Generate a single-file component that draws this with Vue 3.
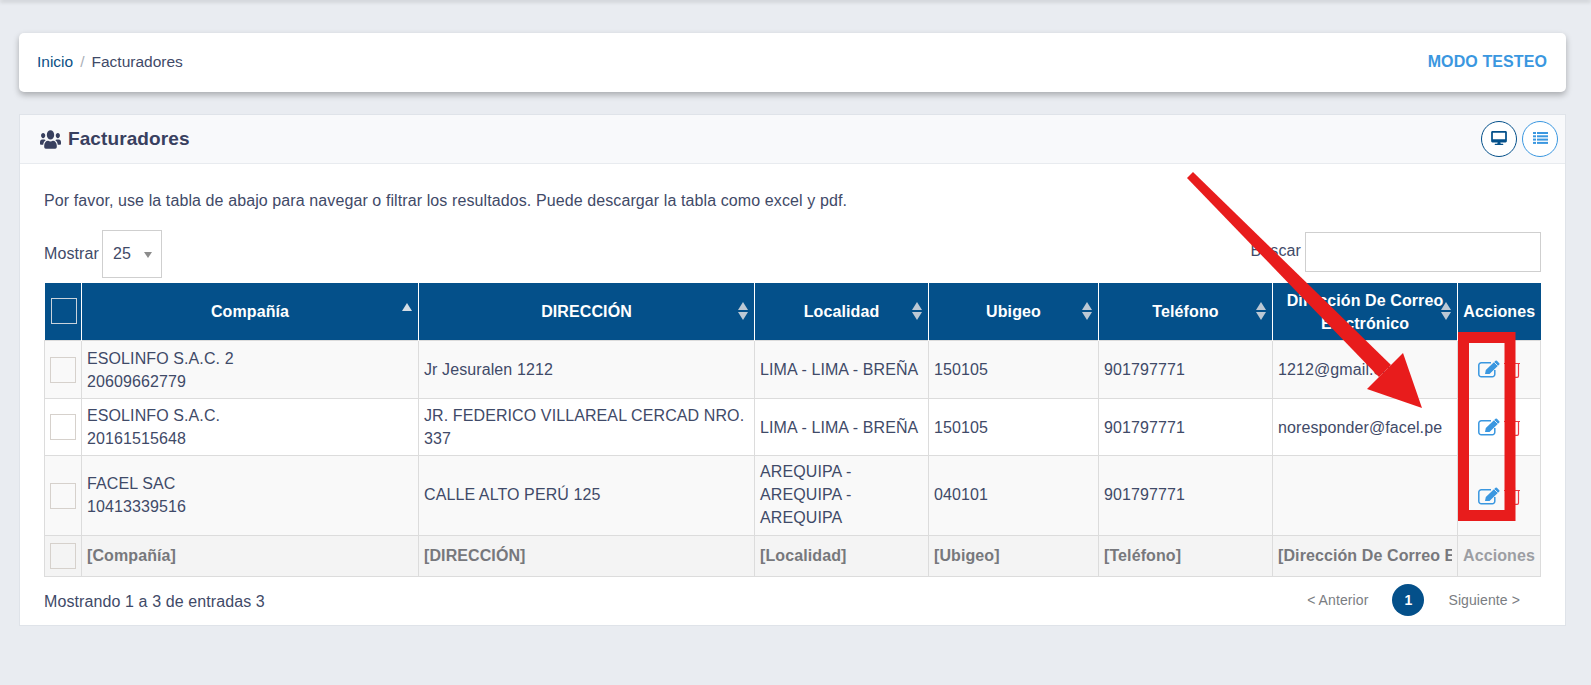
<script setup>
const columns = [
  { label: 'Compañía', sort: 'asc' },
  { label: 'DIRECCIÓN', sort: 'both' },
  { label: 'Localidad', sort: 'both' },
  { label: 'Ubigeo', sort: 'both' },
  { label: 'Teléfono', sort: 'both' },
  { label: 'Dirección De Correo Electrónico', sort: 'both' },
  { label: 'Acciones', sort: null }
]
const rows = [
  { name: 'ESOLINFO S.A.C. 2', ruc: '20609662779', addr: 'Jr Jesuralen 1212', loc: 'LIMA - LIMA - BREÑA', ubi: '150105', tel: '901797771', mail: '1212@gmail.com' },
  { name: 'ESOLINFO S.A.C.', ruc: '20161515648', addr: 'JR. FEDERICO VILLAREAL CERCAD NRO. 337', loc: 'LIMA - LIMA - BREÑA', ubi: '150105', tel: '901797771', mail: 'noresponder@facel.pe' },
  { name: 'FACEL SAC', ruc: '10413339516', addr: 'CALLE ALTO PERÚ 125', loc: 'AREQUIPA - AREQUIPA - AREQUIPA', ubi: '040101', tel: '901797771', mail: '' }
]
const filters = ['[Compañía]', '[DIRECCIÓN]', '[Localidad]', '[Ubigeo]', '[Teléfono]', '[Dirección De Correo Electrónico]']
</script>

<template>
  <div class="page">
    <div class="topbar"></div>

    <div class="crumbs">
      <div class="crumb-list">
        <span class="crumb-link">Inicio</span>
        <span class="crumb-sep">/</span>
        <span>Facturadores</span>
      </div>
      <span class="mode">MODO TESTEO</span>
    </div>

    <section class="panel">
      <header class="panel-head">
        <h1 class="title">
          <svg class="users" viewBox="0 0 640 512" preserveAspectRatio="none"><path fill="currentColor" d="M96 224c35.300 0 64-28.700 64-64s-28.700-64-64-64-64 28.700-64 64 28.700 64 64 64zm448 0c35.300 0 64-28.700 64-64s-28.700-64-64-64-64 28.700-64 64 28.700 64 64 64zm32 32h-64c-17.600 0-33.500 7.100-45.100 18.600 40.300 22.100 68.900 62 75.100 109.400h66c17.700 0 32-14.300 32-32v-32c0-35.300-28.700-64-64-64zm-256 0c61.900 0 112-50.100 112-112S381.900 32 320 32 208 82.100 208 144s50.100 112 112 112zm76.800 32h-8.300c-20.800 10-43.900 16-68.500 16s-47.600-6-68.500-16h-8.300C179.600 288 128 339.600 128 403.200V432c0 26.500 21.500 48 48 48h288c26.500 0 48-21.500 48-48v-28.800c0-63.600-51.600-115.200-115.200-115.200zm-223.700-13.400C161.500 263.100 145.600 256 128 256H64c-35.300 0-64 28.700-64 64v32c0 17.700 14.300 32 32 32h65.900c6.300-47.400 34.900-87.300 75.200-109.400z"/></svg>
          Facturadores
        </h1>
        <div class="head-btns">
          <button class="round dark">
            <svg width="16" height="14" viewBox="0 0 576 512"><path fill="#04508a" d="M528 0H48C21.500 0 0 21.500 0 48v320c0 26.500 21.500 48 48 48h192l-16 48h-72c-13.300 0-24 10.700-24 24s10.700 24 24 24h272c13.300 0 24-10.700 24-24s-10.700-24-24-24h-72l-16-48h192c26.500 0 48-21.500 48-48V48c0-26.500-21.500-48-48-48zm-16 300H64V64h448v236z"/></svg>
          </button>
          <button class="round light">
            <svg width="15" height="12" viewBox="0 0 15 12"><g fill="#3a97e0"><rect x="0" y="0" width="3" height="2"/><rect x="4" y="0" width="11" height="2"/><rect x="0" y="3.300" width="3" height="2"/><rect x="4" y="3.300" width="11" height="2"/><rect x="0" y="6.600" width="3" height="2"/><rect x="4" y="6.600" width="11" height="2"/><rect x="0" y="9.900" width="3" height="2"/><rect x="4" y="9.900" width="11" height="2"/></g></svg>
          </button>
        </div>
      </header>

      <div class="panel-body">
        <p class="intro">Por favor, use la tabla de abajo para navegar o filtrar los resultados. Puede descargar la tabla como excel y pdf.</p>

        <div class="controls">
          <label class="length">
            Mostrar
            <span class="select">25<i class="caret"></i></span>
          </label>
          <label class="search">
            <span class="search-label">Buscar</span>
            <span class="search-box"></span>
          </label>
        </div>

        <table class="grid">
          <colgroup>
            <col style="width:37px" /><col style="width:337px" /><col style="width:336px" /><col style="width:174px" />
            <col style="width:170px" /><col style="width:174px" /><col style="width:185px" /><col style="width:83px" />
          </colgroup>
          <thead>
            <tr>
              <th class="check-cell"><span class="check head-check"></span></th>
              <th v-for="c in columns" :key="c.label">
                {{ c.label }}
                <span v-if="c.sort === 'asc'" class="sort asc"><i class="up"></i></span>
                <span v-else-if="c.sort" class="sort"><i class="up"></i><i class="down"></i></span>
              </th>
            </tr>
          </thead>
          <tbody>
            <tr v-for="r in rows" :key="r.ruc">
              <td class="check-cell"><span class="check"></span></td>
              <td>{{ r.name }}<br />{{ r.ruc }}</td>
              <td>{{ r.addr }}</td>
              <td>{{ r.loc }}</td>
              <td>{{ r.ubi }}</td>
              <td>{{ r.tel }}</td>
              <td>{{ r.mail }}</td>
              <td class="act-cell">
                <svg class="ico-edit" viewBox="0 0 22 18" width="22" height="18">
                  <path d="M16.800 10v4.300a2.500 2.500 0 0 1-2.500 2.500H3.300A2.500 2.500 0 0 1 .8 14.300V5.200A2.500 2.500 0 0 1 3.300 2.700H13" fill="none" stroke="#3a97e0" stroke-width="1.500"/>
                  <path d="M7 14l.8-4L17.500.8a1 1 0 0 1 1.400 0l2.400 2.400a1 1 0 0 1 0 1.400L11.500 14z" fill="#3a97e0"/>
                  <path d="M16.300 2.300l3.400 3.400" stroke="#fff" stroke-width=".8"/>
                </svg>
                <svg class="ico-trash" viewBox="0 0 16 18" width="16" height="18">
                  <path d="M0 3.500h16M2.500 3.500V16a1.300 1.300 0 0 0 1.300 1.300h9.400a1.300 1.300 0 0 0 1.300-1.300V3.500M5.500 3.500V1h5v2.500M6 6.500v8M10 6.500v8" fill="none" stroke="#ee3b43" stroke-width="1.200"/>
                </svg>
              </td>
            </tr>
          </tbody>
          <tfoot>
            <tr>
              <td class="check-cell"><span class="check"></span></td>
              <td v-for="f in filters" :key="f"><div class="clip">{{ f }}</div></td>
              <td class="foot-act">Acciones</td>
            </tr>
          </tfoot>
        </table>

        <div class="table-foot">
          <span class="info">Mostrando 1 a 3 de entradas 3</span>
          <nav class="pager">
            <span>&lt; Anterior</span>
            <span class="current">1</span>
            <span>Siguiente &gt;</span>
          </nav>
        </div>
      </div>
    </section>

    <svg class="annotation" width="1591" height="685" viewBox="0 0 1591 685">
      <polygon points="1193,172 1391,365 1379,377 1187,178" fill="#e81c1c"/>
      <polygon points="1422,408 1403,353 1367,389" fill="#e81c1c"/>
      <rect x="1463.500" y="337.500" width="46.500" height="178" fill="none" stroke="#e81c1c" stroke-width="11"/>
    </svg>
  </div>
</template>

<style>
html, body { margin: 0; background: #e9ecf1; }
</style>

<style scoped>
.page {
  position: relative;
  height: 685px;
  overflow: hidden;
  box-sizing: border-box;
  padding: 0 25px 0 19px;
  background: #e9ecf1;
  font-family: "Liberation Sans", Arial, sans-serif;
  font-size: 16px;
  letter-spacing: .1px;
  color: #3f4a68;
}
.topbar {
  height: 1px;
  margin: -1px -25px 0 -19px;
  box-shadow: 0 1px 4px rgba(0,0,0,.45);
}
.crumbs {
  display: flex;
  justify-content: space-between;
  align-items: center;
  box-sizing: border-box;
  height: 59px;
  margin-top: 33px;
  padding: 0 19px 2px 18px;
  background: #fff;
  border-radius: 5px;
  box-shadow: 0 3px 6px rgba(0,0,0,.28);
}
.crumb-list { display: flex; gap: 7px; align-items: center; font-size: 15.500px; letter-spacing: 0; }
.crumb-link { color: #0b4f85; }
.crumb-sep { color: #aab0b8; }
.mode { color: #3a97e0; font-weight: 700; }
.panel {
  margin-top: 22px;
  background: #fff;
  border: 1px solid #dfe3e9;
}
.panel-head {
  display: flex;
  justify-content: space-between;
  align-items: center;
  height: 48px;
  padding: 0 7px 0 20px;
  background: #f8f9fb;
  border-bottom: 1px solid #e8ebef;
}
.title {
  display: flex;
  align-items: center;
  gap: 7px;
  margin: 0;
  font-size: 19px;
  font-weight: 700;
  letter-spacing: .1px;
  color: #38405f;
}
.users { width: 21px; height: 21px; }
.head-btns { display: flex; gap: 5px; }
.round {
  display: flex;
  align-items: center;
  justify-content: center;
  width: 36px;
  height: 36px;
  padding: 0 0 3px;
  border-radius: 50%;
  background: #fff;
  box-sizing: border-box;
}
.round.dark { border: 1px solid #04508a; }
.round.light { border: 1px solid #3a97e0; }
.panel-body { padding: 25px 24px 0 24px; }
.intro { margin: 0; line-height: 23px; }
.controls {
  display: flex;
  justify-content: space-between;
  margin-top: 18px;
  height: 48px;
}
.length { display: flex; align-items: center; gap: 3px; }
.select {
  display: flex;
  align-items: center;
  justify-content: space-between;
  box-sizing: border-box;
  width: 60px;
  height: 48px;
  padding: 0 9px 0 10px;
  border: 1px solid #cfcfcf;
}
.caret {
  width: 0;
  height: 0;
  margin-top: 2px;
  border: 4px solid transparent;
  border-top: 6px solid #8c8c8c;
  border-bottom: 0;
}
.search { display: flex; align-items: center; gap: 4px; height: 40px; margin-top: 2px; }
.search-label { margin-bottom: 2px; }
.search-box {
  box-sizing: border-box;
  width: 236px;
  height: 40px;
  border: 1px solid #cfcfcf;
}
.grid {
  width: 1496px;
  margin-top: 5px;
  table-layout: fixed;
  border-collapse: collapse;
  line-height: 22.860px;
}
.grid th {
  position: relative;
  height: 57px;
  padding: 3px 6px 0;
  box-sizing: border-box;
  background: #04508a;
  color: #fff;
  font-weight: 700;
  text-align: center;
  border-right: 1px solid #fff;
}
.grid th:last-child { border-right: 0; padding: 3px 0 0; }
.grid th.check-cell { padding: 0 0 0 6px; text-align: left; }
.grid td {
  padding: 3px 5px 0;
  box-sizing: border-box;
  border: 1px solid #dcdcdc;
  vertical-align: middle;
}
.grid td.check-cell { padding: 0 0 0 5px; }
.grid tbody tr:nth-child(1) td { height: 58px; }
.grid tbody tr:nth-child(2) td { height: 57px; }
.grid tbody tr:nth-child(3) td { height: 80px; padding-top: 1px; }
.grid tbody tr:nth-child(3) td.check-cell { padding-top: 0; }
.grid tbody tr:nth-child(odd) td { background: #f9f9f9; }
.grid tbody tr:nth-child(even) td { background: #fff; }
.grid tfoot td {
  height: 41px;
  padding: 2px 5px 0;
  background: #f4f4f4;
  color: #77787c;
  font-weight: 700;
  white-space: nowrap;
}
.grid tfoot td.check-cell { padding: 0 0 0 5px; }
.grid tfoot td.foot-act { color: #9c9ea3; text-align: center; padding: 2px 0 0; }
.clip { overflow: hidden; }
.check {
  display: block;
  width: 26px;
  height: 26px;
  box-sizing: border-box;
  border: 1px solid #d6d1cc;
  margin-top: 1px;
}
.head-check { border-color: #c9d3dc; margin-top: 0; }
.sort {
  position: absolute;
  right: 6px;
  top: 50%;
  transform: translateY(-50%);
  display: flex;
  flex-direction: column;
  gap: 2px;
}
.sort.asc { transform: translateY(-8px); }
.sort i { display: block; width: 0; height: 0; border: 5px solid transparent; }
.sort .up { border-bottom: 8px solid #bcc8d4; border-top: 0; }
.sort .down { border-top: 8px solid #bcc8d4; border-bottom: 0; }
.sort.asc .up { border-bottom-color: #d5dde5; }
.grid td.act-cell { white-space: nowrap; padding: 0 0 0 20px; }
.ico-edit { vertical-align: middle; }
.ico-trash { vertical-align: middle; margin-left: 4px; }
.table-foot {
  display: flex;
  justify-content: space-between;
  align-items: center;
  height: 48px;
}
.info { margin-top: 2px; }
.pager {
  display: flex;
  align-items: center;
  gap: 24px;
  margin: 0 21px 1px 0;
  font-size: 14px;
  color: #7a7d82;
}
.current {
  display: flex;
  align-items: center;
  justify-content: center;
  width: 32px;
  height: 32px;
  border-radius: 50%;
  background: #04508a;
  color: #fff;
  font-weight: 700;
}
.annotation { position: absolute; left: 0; top: 0; pointer-events: none; }
</style>
